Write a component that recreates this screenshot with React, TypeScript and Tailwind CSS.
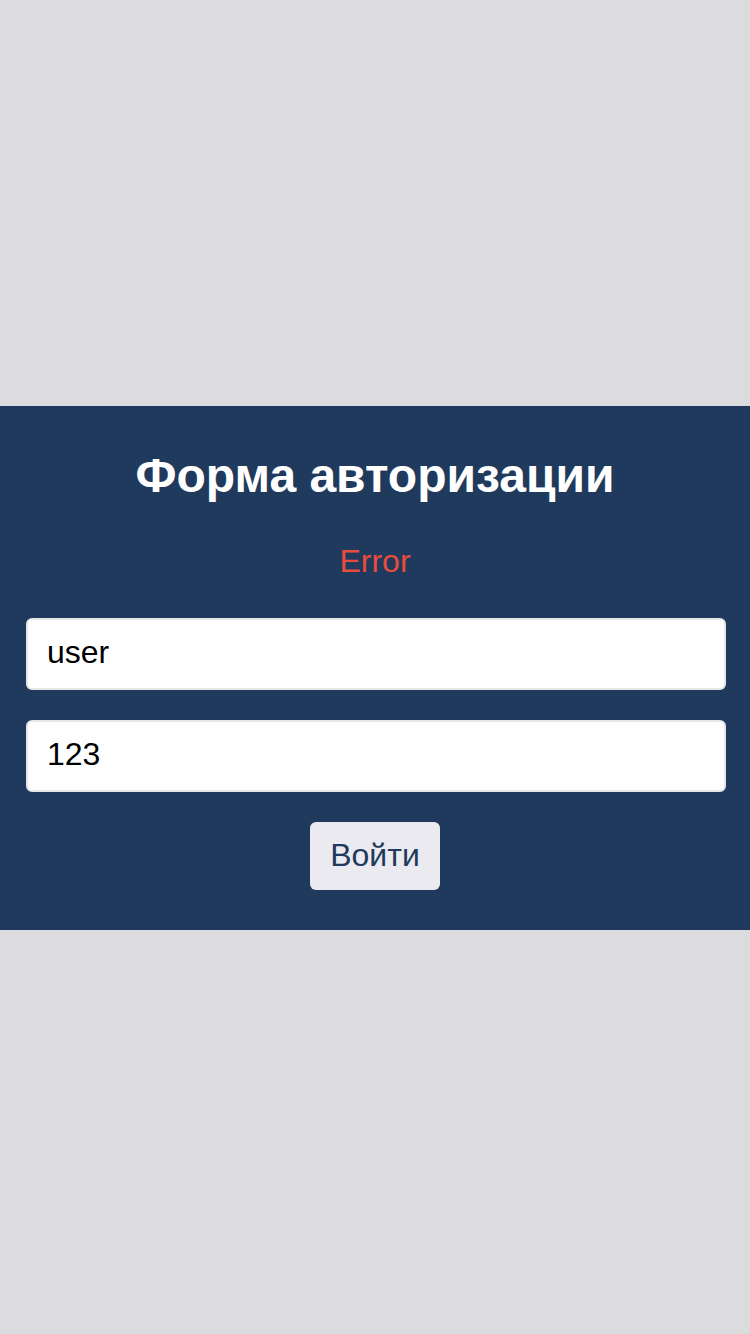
import React from "react";

const App: React.FC = () => {
  return (
    <div
      className="min-h-screen w-full flex items-center bg-[#dcdcde] pt-[2px]"
      style={{ fontFamily: '"Liberation Sans", Arial, sans-serif' }}
    >
      <form
        className="w-full bg-[#1f3a5c] pt-[41px] pb-[40px] flex flex-col items-center"
        onSubmit={(e) => e.preventDefault()}
      >
        <h1 className="text-[48px] leading-[58px] font-bold text-white text-center">
          Форма авторизации
        </h1>
        <p className="mt-[38px] text-[32px] leading-[37px] text-[#e74c3c] text-center">
          Error
        </p>
        <div className="mt-[38px] w-full flex flex-col gap-[30px] pl-[26px] pr-[24px]">
          <input
            type="text"
            defaultValue="user"
            className="h-[72px] w-full rounded-md border-2 border-[#e6e6e6] bg-white px-[19px] pb-[4px] text-[32px] text-black outline-none"
          />
          <input
            type="text"
            defaultValue="123"
            className="h-[72px] w-full rounded-md border-2 border-[#e6e6e6] bg-white px-[19px] pb-[4px] text-[32px] text-black outline-none"
          />
        </div>
        <button
          type="submit"
          className="mt-[30px] h-[68px] w-[130px] rounded-md bg-[#eaeaf0] pb-[2px] text-[32px] leading-[37px] text-[#1f3a5c]"
        >
          Войти
        </button>
      </form>
    </div>
  );
};

export default App;
